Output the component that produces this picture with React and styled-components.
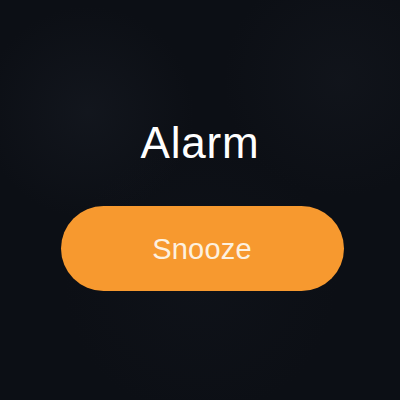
import React from 'react';
import styled, { createGlobalStyle } from 'styled-components';

const GlobalStyle = createGlobalStyle`
  html, body {
    margin: 0;
    padding: 0;
    background: #0d1016;
  }
`;

const Screen = styled.div`
  width: 400px;
  height: 400px;
  box-sizing: border-box;
  padding-top: 121px;
  display: flex;
  flex-direction: column;
  align-items: center;
  background:
    radial-gradient(circle at 22% 28%, rgba(40, 46, 58, 0.22), transparent 25%),
    radial-gradient(circle at 85% 20%, rgba(35, 40, 50, 0.2), transparent 25%),
    radial-gradient(circle at 50% 70%, rgba(25, 30, 40, 0.2), transparent 40%),
    #0c0f15;
  font-family: 'Liberation Sans', Arial, sans-serif;
`;

const Title = styled.h1`
  margin: 0;
  font-size: 44px;
  line-height: 44px;
  font-weight: 400;
  color: #ffffff;
  letter-spacing: 0.8px;
`;

const SnoozeButton = styled.button`
  margin-top: 41px;
  margin-left: 4px;
  width: 283px;
  height: 85px;
  border: none;
  border-radius: 43px;
  background: #f7992f;
  color: #fdf1e0;
  font-family: inherit;
  font-size: 29px;
  letter-spacing: 0.2px;
  padding: 0;
  padding-top: 2px;
  cursor: pointer;
`;

const App = () => (
  <>
    <GlobalStyle />
    <Screen>
      <Title>Alarm</Title>
      <SnoozeButton>Snooze</SnoozeButton>
    </Screen>
  </>
);

export default App;
